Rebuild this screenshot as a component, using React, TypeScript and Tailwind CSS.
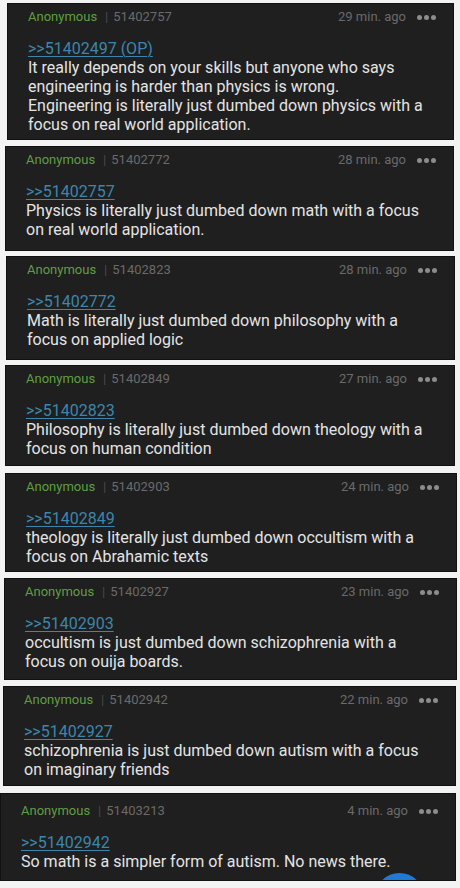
import React from "react";

type Post = {
  id: string;
  time: string;
  reply: string;
  text: string;
  box: string;
};

const posts: Post[] = [
  {
    id: "51402757",
    time: "29 min. ago",
    reply: ">>51402497 (OP)",
    text: "It really depends on your skills but anyone who says engineering is harder than physics is wrong.\nEngineering is literally just dumbed down physics with a focus on real world application.",
    box: "mt-[3px] ml-[7px] w-[447px] h-[137px]",
  },
  {
    id: "51402772",
    time: "28 min. ago",
    reply: ">>51402757",
    text: "Physics is literally just dumbed down math with a focus on real world application.",
    box: "mt-[6px] ml-[5px] w-[449px] h-[105px]",
  },
  {
    id: "51402823",
    time: "28 min. ago",
    reply: ">>51402772",
    text: "Math is literally just dumbed down philosophy with a focus on applied logic",
    box: "mt-[5px] ml-[6px] w-[449px] h-[104px]",
  },
  {
    id: "51402849",
    time: "27 min. ago",
    reply: ">>51402823",
    text: "Philosophy is literally just dumbed down theology with a focus on human condition",
    box: "mt-[5px] ml-[5px] w-[450px] h-[101px]",
  },
  {
    id: "51402903",
    time: "24 min. ago",
    reply: ">>51402849",
    text: "theology is literally just dumbed down occultism with a focus on Abrahamic texts",
    box: "mt-[7px] ml-[5px] w-[452px] h-[99px]",
  },
  {
    id: "51402927",
    time: "23 min. ago",
    reply: ">>51402903",
    text: "occultism is just dumbed down schizophrenia with a focus on ouija boards.",
    box: "mt-[6px] ml-[4px] w-[453px] h-[102px]",
  },
  {
    id: "51402942",
    time: "22 min. ago",
    reply: ">>51402927",
    text: "schizophrenia is just dumbed down autism with a focus on imaginary friends",
    box: "mt-[6px] ml-[3px] w-[453px] h-[100px]",
  },
  {
    id: "51403213",
    time: "4 min. ago",
    reply: ">>51402942",
    text: "So math is a simpler form of autism. No news there.",
    box: "mt-[7px] ml-0 w-[456px] h-[88px] pt-[7px]",
  },
];

function Dots() {
  return (
    <div className="flex items-center gap-[2px]">
      <span className="h-[5px] w-[5px] rounded-full bg-[#8c8c8c]" />
      <span className="h-[5px] w-[5px] rounded-full bg-[#8c8c8c]" />
      <span className="h-[5px] w-[5px] rounded-full bg-[#8c8c8c]" />
    </div>
  );
}

function PostCard({ post, last }: { post: Post; last: boolean }) {
  return (
    <div
      className={`relative flex flex-col overflow-hidden border border-[#111] bg-[#1f1f1f] pl-5 pr-[17px] pt-[3px] ${post.box}`}
    >
      <div className="flex h-[20px] items-center text-[13px]">
        <span className="text-[#5f9e42]">Anonymous</span>
        <span className="ml-2 text-[#4a4a4a]">|</span>
        <span className="ml-[5px] text-[#6a6a6a]">{post.id}</span>
        <span className="ml-auto mr-[11px] text-[#6a6a6a]">{post.time}</span>
        <Dots />
      </div>
      <div className="mt-[12px] text-[16px] leading-[19px] text-[#3c86ad] underline decoration-1 underline-offset-2">
        {post.reply}
      </div>
      <p className="whitespace-pre-line text-[16px] leading-[19px] text-[#e4e4e4]">{post.text}</p>
      {last && (
        <div className="absolute right-[31px] top-[79px] h-[49px] w-[49px] rounded-full bg-[#1f7ad6]" />
      )}
    </div>
  );
}

export default function App() {
  return (
    <div className="h-[888px] w-[460px] overflow-hidden bg-[#f3f3f3] font-['Roboto',sans-serif]">
      {posts.map((p, i) => (
        <PostCard key={p.id} post={p} last={i === posts.length - 1} />
      ))}
    </div>
  );
}
